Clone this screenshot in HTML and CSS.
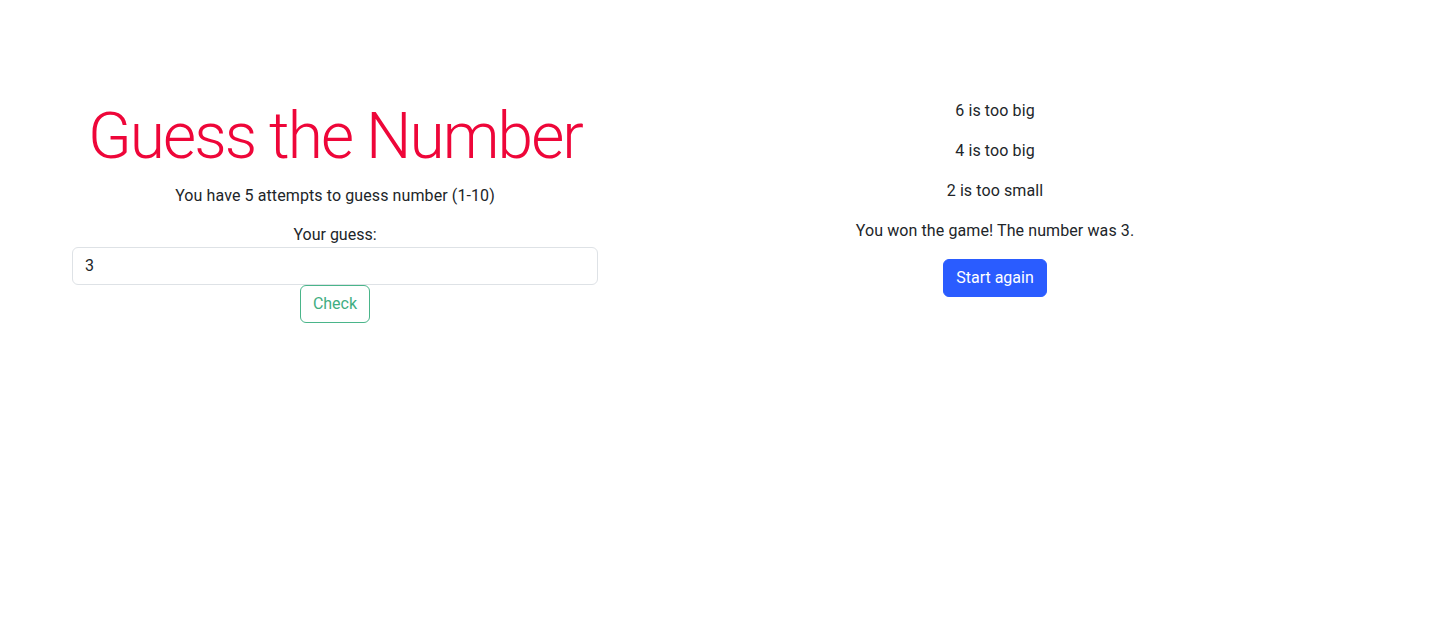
FILE: index.html
```html
<!DOCTYPE html>
<html lang="en">
<head>
<meta charset="utf-8">
<title>Guess the Number</title>
<link rel="stylesheet" href="styles.css">
</head>
<body>
<div class="container">
  <div class="col col-left">
    <h1 class="title">Guess the Number</h1>
    <p class="info">You have 5 attempts to guess number (1-10)</p>
    <form class="guess-form">
      <label class="label" for="guess">Your guess:</label>
      <input class="input" id="guess" type="text" value="3">
      <button class="btn btn-check" type="button">Check</button>
    </form>
  </div>
  <div class="col col-right">
    <p class="msg">6 is too big</p>
    <p class="msg">4 is too big</p>
    <p class="msg">2 is too small</p>
    <p class="msg">You won the game! The number was 3.</p>
    <button class="btn btn-start" type="button">Start again</button>
  </div>
</div>
</body>
</html>
```
FILE: styles.css
```css
* { box-sizing: border-box; }
html, body { margin: 0; padding: 0; background: #fff; }
body {
  font-family: Roboto, "Liberation Sans", sans-serif;
  font-size: 16px;
  line-height: 24px;
  color: #212529;
}
.container {
  width: 1320px;
  margin-left: 60px;
  display: flex;
}
.col {
  width: 550px;
  padding: 0 12px;
  display: flex;
  flex-direction: column;
  align-items: center;
  text-align: center;
}
.col-left { padding-top: 98px; }
.col-right { margin-left: 110px; padding-top: 99px; }
.info, .msg { letter-spacing: 0.1px; }
.title {
  font-family: Roboto, sans-serif;
  font-weight: 300;
  font-size: 64px;
  line-height: 1.2;
  letter-spacing: -1.9px;
  color: #ee0639;
  margin: 1px 0 8px;
  white-space: nowrap;
}
.info, .msg { margin: 0 0 16px; }
.guess-form {
  width: 100%;
  display: flex;
  flex-direction: column;
  align-items: center;
}
.label { display: block; margin-top: -1px; }
.input {
  width: 100%;
  height: 38px;
  padding: 6px 12px;
  font: inherit;
  color: #212529;
  border: 1px solid #dee2e6;
  border-radius: 6px;
  background: #fff;
}
.btn {
  font: inherit;
  height: 38px;
  padding: 6px 12px;
  border-radius: 6px;
  border: 1px solid transparent;
  cursor: pointer;
}
.btn-check {
  background: #fff;
  color: #3fae82;
  border-color: #4ab58a;
}
.btn-start {
  background: #2a5cff;
  color: #fff;
  border-color: #2a5cff;
}
```
